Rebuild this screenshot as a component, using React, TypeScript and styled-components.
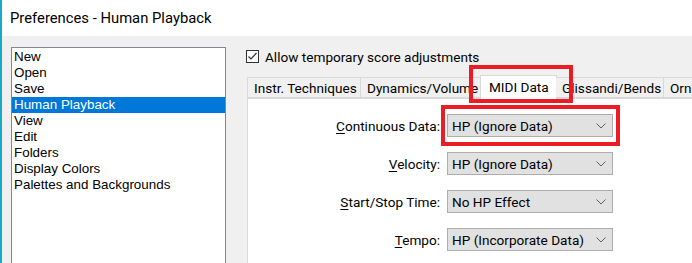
import React from "react";
import styled, { createGlobalStyle } from "styled-components";

const GlobalStyle = createGlobalStyle`
  html, body {
    margin: 0;
    padding: 0;
    background: #f0f0f0;
  }
`;

const UI_FONT = `Roboto, "Noto Sans", Arial, sans-serif`;
const LIST_FONT = `"Liberation Sans", Arial, sans-serif`;

const Window = styled.div`
  width: 692px;
  height: 263px;
  overflow: hidden;
  display: flex;
  flex-direction: column;
  border-left: 2px solid #1aa9c4;
  box-sizing: border-box;
  background: #f0f0f0;
  font-family: ${UI_FONT};
  font-size: 13.6px;
  color: #000;
`;

const TitleBar = styled.div`
  height: 36px;
  flex: none;
  background: #fff;
  display: flex;
  align-items: center;
  padding-left: 8px;
  font-size: 14.8px;
  color: #000;
`;

const Body = styled.div`
  flex: 1;
  display: flex;
  padding: 11px 0 0 9px;
  min-height: 0;
`;

const ListBox = styled.ul`
  flex: none;
  width: 215px;
  margin: 0 20px 0 0;
  padding: 1px 0 0 0;
  list-style: none;
  background: #fff;
  border: 1px solid #828790;
  border-bottom: none;
  box-sizing: border-box;
  font-family: ${LIST_FONT};
  font-size: 13.4px;
`;

const ListItem = styled.li<{ selected?: boolean }>`
  height: 16px;
  line-height: 16px;
  padding-left: 2px;
  background: ${(p) => (p.selected ? "#0078d7" : "transparent")};
  color: ${(p) => (p.selected ? "#fff" : "#000")};
  white-space: nowrap;
`;

const RightPane = styled.div`
  flex: 1;
  display: flex;
  flex-direction: column;
  min-width: 0;
`;

const CheckRow = styled.label`
  display: flex;
  align-items: center;
  height: 19px;
  white-space: nowrap;
`;

const CheckBox = styled.span`
  width: 13px;
  height: 13px;
  box-sizing: border-box;
  border: 1px solid #333;
  background: #fff;
  margin-right: 6px;
  display: flex;
  align-items: center;
  justify-content: center;
`;

const TabStrip = styled.div`
  display: flex;
  align-items: flex-end;
  height: 24px;
  margin-top: 8px;
  margin-left: 1px;
  white-space: nowrap;
  position: relative;
  z-index: 1;
`;

const Tab = styled.div<{ active?: boolean; w: number }>`
  position: relative;
  flex: none;
  width: ${(p) => p.w}px;
  height: ${(p) => (p.active ? 24 : 21)}px;
  box-sizing: border-box;
  border: 1px solid #d9d9d9;
  border-left: ${(p) => (p.active ? "1px solid #d9d9d9" : "none")};
  border-bottom: ${(p) => (p.active ? "none" : "1px solid #d9d9d9")};
  background: ${(p) => (p.active ? "#fff" : "#f0f0f0")};
  margin: ${(p) => (p.active ? "0 -1px -1px -1px" : "0")};
  display: flex;
  align-items: center;
  padding: 0 0 ${(p) => (p.active ? 2 : 0)}px ${(p) => (p.active ? 8 : 6)}px;

  &:first-child {
    border-left: 1px solid #d9d9d9;
  }
`;

const Panel = styled.div`
  flex: 1;
  background: #fff;
  border-top: 1px solid #d9d9d9;
  border-left: 1px solid #d9d9d9;
  margin-left: 1px;
  padding: 15px 0 0 0;
`;

const FormGrid = styled.div`
  display: grid;
  grid-template-columns: 192px 166px;
  column-gap: 7px;
  row-gap: 15px;
  align-items: center;
`;

const FieldLabel = styled.div`
  text-align: right;
  white-space: nowrap;
`;

const Key = styled.span`
  text-decoration: underline;
  text-underline-offset: 2px;
`;

const SelectWrap = styled.div`
  position: relative;
`;

const Select = styled.div`
  height: 23px;
  box-sizing: border-box;
  border: 1px solid #adadad;
  background: #e1e1e1;
  display: flex;
  align-items: center;
  justify-content: space-between;
  padding: 0 6px 0 4px;
  white-space: nowrap;
`;

const Callout = styled.div<{ t: number; r: number; b: number; l: number }>`
  position: absolute;
  top: ${(p) => p.t}px;
  right: ${(p) => p.r}px;
  bottom: ${(p) => p.b}px;
  left: ${(p) => p.l}px;
  border: 4px solid #ec1c24;
  pointer-events: none;
  z-index: 5;
`;

const Chevron = () => (
  <svg width="10" height="6" viewBox="0 0 10 6">
    <path d="M0.5 0.5 L5 5 L9.5 0.5" fill="none" stroke="#606060" strokeWidth="1" />
  </svg>
);

const Check = () => (
  <svg width="11" height="11" viewBox="0 0 11 11">
    <path d="M1.5 5.5 L4 8 L9.5 2" fill="none" stroke="#333" strokeWidth="1.2" />
  </svg>
);

const items = [
  "New",
  "Open",
  "Save",
  "Human Playback",
  "View",
  "Edit",
  "Folders",
  "Display Colors",
  "Palettes and Backgrounds",
];

const tabs = [
  { label: "Instr. Techniques", w: 114 },
  { label: "Dynamics/Volume", w: 120 },
  { label: "MIDI Data", w: 77, active: true },
  { label: "Glissandi/Bends", w: 108 },
  { label: "Orn", w: 40 },
];

const fields: { key: string; rest: string; value: string; callout?: boolean }[] = [
  { key: "C", rest: "ontinuous Data:", value: "HP (Ignore Data)", callout: true },
  { key: "V", rest: "elocity:", value: "HP (Ignore Data)" },
  { key: "S", rest: "tart/Stop Time:", value: "No HP Effect" },
  { key: "T", rest: "empo:", value: "HP (Incorporate Data)" },
];

export default function App() {
  return (
    <>
      <GlobalStyle />
      <Window>
        <TitleBar>Preferences - Human Playback</TitleBar>
        <Body>
          <ListBox>
            {items.map((it) => (
              <ListItem key={it} selected={it === "Human Playback"}>
                {it}
              </ListItem>
            ))}
          </ListBox>
          <RightPane>
            <CheckRow>
              <CheckBox>
                <Check />
              </CheckBox>
              Allow temporary score adjustments
            </CheckRow>
            <TabStrip>
              {tabs.map((t) => (
                <Tab key={t.label} w={t.w} active={t.active}>
                  {t.label}
                  {t.active && <Callout t={-11} r={-17} b={-4} l={-12} />}
                </Tab>
              ))}
            </TabStrip>
            <Panel>
              <FormGrid>
                {fields.map((f) => (
                  <React.Fragment key={f.key}>
                    <FieldLabel>
                      <Key>{f.key}</Key>
                      {f.rest}
                    </FieldLabel>
                    <SelectWrap>
                      <Select>
                        {f.value}
                        <Chevron />
                      </Select>
                      {f.callout && <Callout t={-9} r={-7} b={-9} l={-6} />}
                    </SelectWrap>
                  </React.Fragment>
                ))}
              </FormGrid>
            </Panel>
          </RightPane>
        </Body>
      </Window>
    </>
  );
}
